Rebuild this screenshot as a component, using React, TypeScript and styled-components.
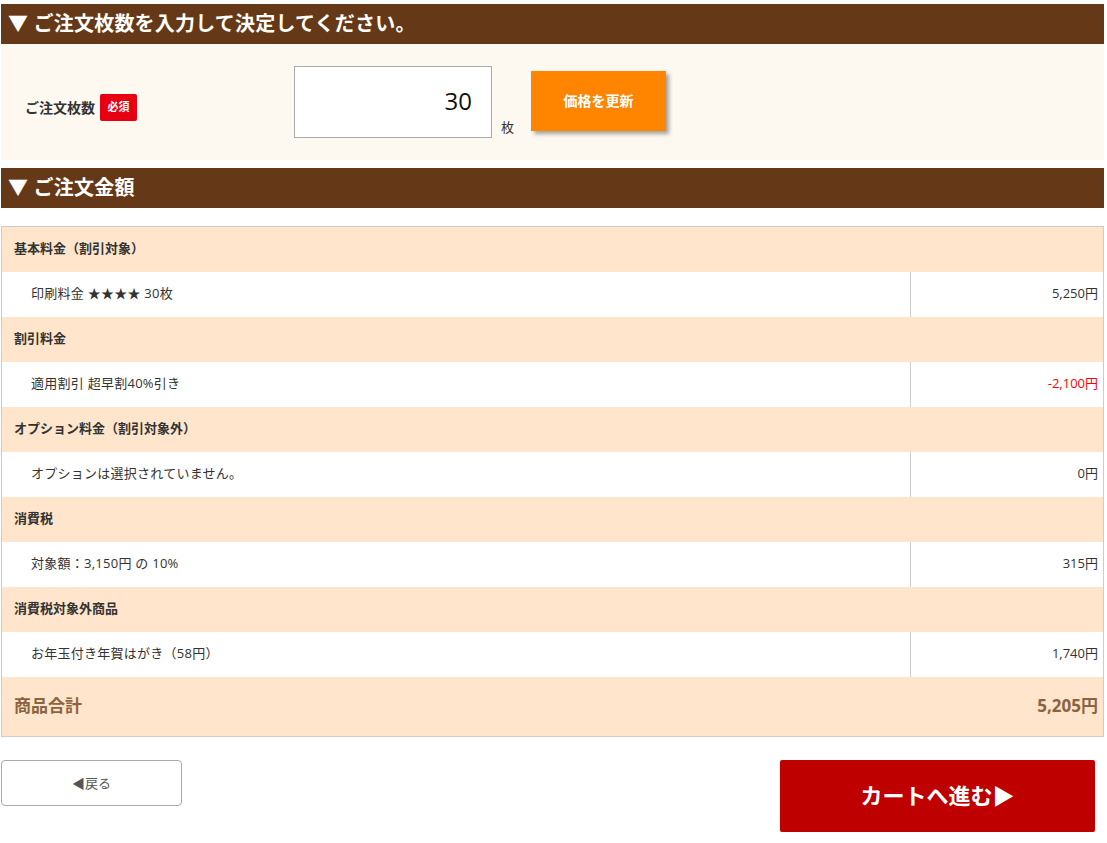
import styled, { createGlobalStyle } from 'styled-components';

const GlobalStyle = createGlobalStyle`
    body {
        margin: 0;
        background: #fff;
        font-family: "Open Sans", "Noto Sans CJK JP", sans-serif;
        color: #333;
    }
`

const Page = styled.div`
    width: 1103px;
    margin-left: 1px;
    padding-top: 4px;
`
const SectionTitle = styled.h2`
    margin: 0;
    height: 40px;
    box-sizing: border-box;
    padding: 0 0 3px 7px;
    display: flex;
    align-items: center;
    background-color: #653918;
    color: #fff;
    font-size: 20px;
    font-weight: bold;
    letter-spacing: 0.01em;
`
const FormArea = styled.div`
    background-color: #fdf8f0;
    height: 116px;
    display: flex;
    align-items: center;
    margin-bottom: 8px;
`
const FieldLabel = styled.div`
    width: 293px;
    margin-top: 10px;
    padding-left: 24px;
    box-sizing: border-box;
    display: flex;
    align-items: center;
    gap: 5px;
    font-size: 14px;
    font-weight: bold;
    color: #333;
`
const RequiredBadge = styled.span`
    display: inline-flex;
    align-items: center;
    justify-content: center;
    width: 37px;
    height: 27px;
    padding-bottom: 2px;
    box-sizing: border-box;
    border-radius: 2px;
    background-color: #e60012;
    color: #fff;
    font-size: 11px;
    font-weight: bold;
`
const QuantityInput = styled.input`
    width: 198px;
    height: 72px;
    box-sizing: border-box;
    border: 1px solid #aaa;
    background: #fff;
    text-align: right;
    padding: 0 19px 3px 0;
    font-size: 24px;
    font-family: "Open Sans", sans-serif;
    color: #111;
`
const Unit = styled.span`
    align-self: flex-end;
    margin: 0 17px 24px 9px;
    font-size: 13px;
    color: #333;
`
const UpdateButton = styled.button`
    width: 135px;
    height: 60px;
    margin-bottom: 2px;
    padding-bottom: 4px;
    border: none;
    background-color: #ff8400;
    color: #fff;
    font-family: inherit;
    font-size: 14px;
    font-weight: bold;
    box-shadow: 3px 3px 4px rgba(0, 0, 0, 0.35);
`
const PriceTable = styled.div`
    margin-top: 18px;
    border: 1px solid #ccc;
`
const GroupRow = styled.div`
    height: 45px;
    box-sizing: border-box;
    padding: 0 0 4px 12px;
    display: flex;
    align-items: center;
    background-color: #fee5cb;
    font-size: 13px;
    font-weight: bold;
    color: #333;
`
const ItemRow = styled.div`
    height: 45px;
    display: grid;
    grid-template-columns: 909px 1fr;
    background-color: #fff;
    font-size: 13px;
    color: #333;
`
const ItemName = styled.div`
    display: flex;
    align-items: center;
    padding: 0 0 4px 29px;
    letter-spacing: 0.02em;
    border-right: 1px solid #ccc;
`
const ItemPrice = styled.div<{ $minus?: boolean }>`
    display: flex;
    align-items: center;
    justify-content: flex-end;
    padding: 0 5px 4px 0;
    color: ${(p) => (p.$minus ? '#ff0000' : '#333')};
`
const TotalRow = styled.div`
    height: 59px;
    box-sizing: border-box;
    display: flex;
    align-items: center;
    justify-content: space-between;
    padding: 0 5px 5px 12px;
    background-color: #fee5cb;
    color: #8a6341;
    font-size: 17px;
    font-weight: bold;
`
const ButtonBar = styled.div`
    display: flex;
    justify-content: space-between;
    align-items: flex-start;
    margin-top: 23px;
    padding-right: 9px;
`
const BackButton = styled.button`
    width: 181px;
    height: 46px;
    box-sizing: border-box;
    padding-bottom: 3px;
    border: 1px solid #aaa;
    border-radius: 4px;
    background: #fff;
    color: #555;
    font-family: inherit;
    font-size: 13px;
`
const CartButton = styled.button`
    width: 315px;
    height: 72px;
    padding-bottom: 5px;
    border: none;
    border-radius: 2px;
    background-color: #bf0000;
    color: #fff;
    font-family: inherit;
    font-size: 22px;
    font-weight: bold;
    box-shadow: 0 1px 2px rgba(0, 0, 0, 0.2);
`

const groups = [
    { title: '基本料金（割引対象）', name: '印刷料金 ★★★★ 30枚', price: '5,250円' },
    { title: '割引料金', name: '適用割引 超早割40%引き', price: '-2,100円', minus: true },
    { title: 'オプション料金（割引対象外）', name: 'オプションは選択されていません。', price: '0円' },
    { title: '消費税', name: '対象額：3,150円 の 10%', price: '315円' },
    { title: '消費税対象外商品', name: 'お年玉付き年賀はがき（58円）', price: '1,740円' },
];

export default function App() {
    return (
        <Page>
            <GlobalStyle />
            <SectionTitle>▼ ご注文枚数を入力して決定してください。</SectionTitle>
            <FormArea>
                <FieldLabel>
                    ご注文枚数 <RequiredBadge>必須</RequiredBadge>
                </FieldLabel>
                <QuantityInput type="text" defaultValue="30" />
                <Unit>枚</Unit>
                <UpdateButton>価格を更新</UpdateButton>
            </FormArea>
            <SectionTitle>▼ ご注文金額</SectionTitle>
            <PriceTable>
                {groups.map((g) => (
                    <div key={g.title}>
                        <GroupRow>{g.title}</GroupRow>
                        <ItemRow>
                            <ItemName>{g.name}</ItemName>
                            <ItemPrice $minus={g.minus}>{g.price}</ItemPrice>
                        </ItemRow>
                    </div>
                ))}
                <TotalRow>
                    <span>商品合計</span>
                    <span>5,205円</span>
                </TotalRow>
            </PriceTable>
            <ButtonBar>
                <BackButton>◀戻る</BackButton>
                <CartButton>カートへ進む▶</CartButton>
            </ButtonBar>
        </Page>
    )
}
